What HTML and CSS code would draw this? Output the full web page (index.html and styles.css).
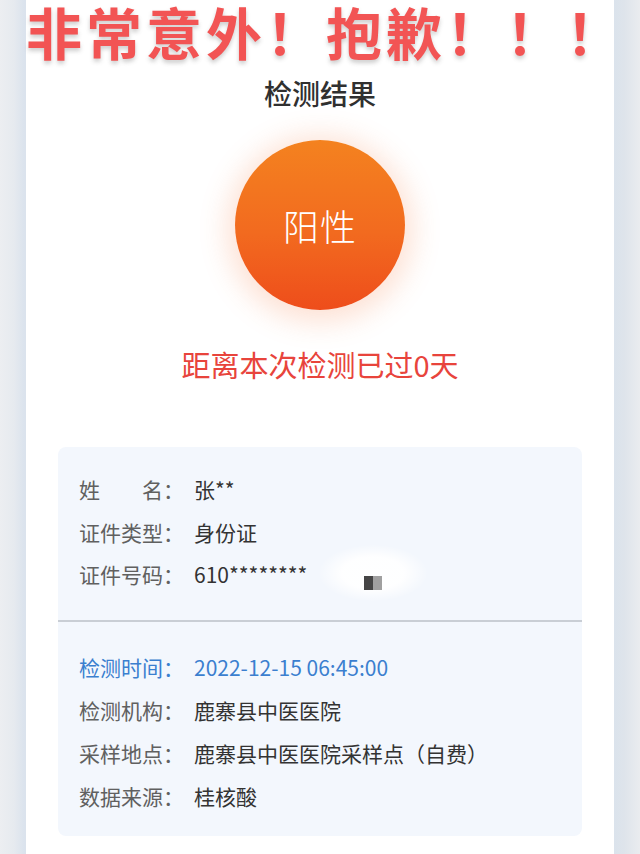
FILE: index.html
```html
<!DOCTYPE html>
<html lang="zh-CN">
<head>
<meta charset="utf-8">
<link rel="stylesheet" href="styles.css">
</head>
<body>
<div class="page">
  <div class="card">
    <h1 class="banner">非常意外！抱歉！！！</h1>
    <h2 class="title">检测结果</h2>
    <div class="badge-wrap">
      <div class="badge">阳性</div>
    </div>
    <p class="days">距离本次检测已过0天</p>
    <div class="info">
      <div class="section">
        <div class="row"><span class="label label-just"><span>姓</span><span>名</span></span><span class="colon">：</span><span class="value">张**</span></div>
        <div class="row"><span class="label">证件类型</span><span class="colon">：</span><span class="value">身份证</span></div>
        <div class="row id-row"><span class="label">证件号码</span><span class="colon">：</span><span class="value">610********</span>
          <span class="mosaic"><span class="px dark"></span><span class="px light"></span></span>
        </div>
      </div>
      <div class="divider"></div>
      <div class="section section-2">
        <div class="row row-blue"><span class="label">检测时间</span><span class="colon">：</span><span class="value">2022-12-15 06:45:00</span></div>
        <div class="row"><span class="label">检测机构</span><span class="colon">：</span><span class="value">鹿寨县中医医院</span></div>
        <div class="row"><span class="label">采样地点</span><span class="colon">：</span><span class="value">鹿寨县中医医院采样点（自费）</span></div>
        <div class="row"><span class="label">数据来源</span><span class="colon">：</span><span class="value">桂核酸</span></div>
      </div>
    </div>
  </div>
</div>
</body>
</html>
```

FILE: styles.css
```css
* { box-sizing: border-box; }
html, body { margin: 0; padding: 0; }
body {
  width: 640px;
  height: 854px;
  overflow: hidden;
  font-family: "Noto Sans CJK SC", "Noto Sans", sans-serif;
  background: linear-gradient(90deg, #eceef1 0px, #e6eaef 14px, #dbe3ed 24px, #dbe3ed 26px, #ffffff 26px, #ffffff 614px, #dbe3ec 614px, #dee4eb 624px, #eaecef 640px);
}
.page {
  padding: 0 26px;
}
.card {
  background: #ffffff;
  min-height: 854px;
  padding-top: 0;
}
.banner {
  margin: 0 -12px 0 0;
  font-size: 56px;
  line-height: 62px;
  font-weight: 700;
  letter-spacing: 4px;
  color: #f25454;
  white-space: nowrap;
  text-shadow: 0 3px 4px rgba(80, 80, 80, 0.28);
}
.title {
  margin: 13px 0 0;
  text-align: center;
  font-size: 28px;
  line-height: 36px;
  font-weight: 500;
  color: #303030;
}
.badge-wrap {
  display: flex;
  justify-content: center;
  margin-top: 29px;
}
.badge {
  width: 170px;
  height: 170px;
  border-radius: 50%;
  background: linear-gradient(180deg, #f4821f 0%, #f26a1f 55%, #ee4d1b 100%);
  box-shadow: 0 4px 28px 8px rgba(244, 120, 60, 0.22);
  color: #fff;
  font-size: 36px;
  font-weight: 300;
  display: flex;
  align-items: center;
  justify-content: center;
  letter-spacing: 1px;
}
.days {
  margin: 34px 0 0;
  text-align: center;
  font-size: 29px;
  line-height: 40px;
  color: #e8443c;
}
.info {
  margin: 63px 32px 0;
  background: #f3f7fd;
  border-radius: 8px;
  padding-bottom: 17px;
}
.section {
  padding: 21px 21px 24px;
  display: flex;
  flex-direction: column;
}
.section-2 { padding-top: 24px; padding-bottom: 0; }
.row {
  display: flex;
  align-items: center;
  font-size: 21px;
  line-height: 42.5px;
  color: #333;
  position: relative;
}
.section-2 .row { line-height: 43.3px; }
.label {
  color: #606060;
  width: 84px;
  white-space: nowrap;
}
.label-just {
  display: flex;
  justify-content: space-between;
}
.colon {
  color: #606060;
  width: 16px;
}
.value {
  margin-left: 15px;
  color: #333;
}
.row-blue .label,
.row-blue .colon,
.row-blue .value { color: #3b7fcf; }
.divider {
  height: 2px;
  background: #c9ced5;
}
.mosaic {
  position: absolute;
  left: 240px;
  top: -8px;
  width: 108px;
  height: 56px;
  border-radius: 50%;
  background: radial-gradient(ellipse at center, rgba(255,255,255,0.95) 40%, rgba(255,255,255,0) 72%);
  display: flex;
  align-items: center;
  justify-content: center;
  padding-top: 20px;
}
.px {
  width: 9px;
  height: 14px;
  display: block;
}
.px.dark { background: #454545; }
.px.light { background: #a0a0a0; }
```
